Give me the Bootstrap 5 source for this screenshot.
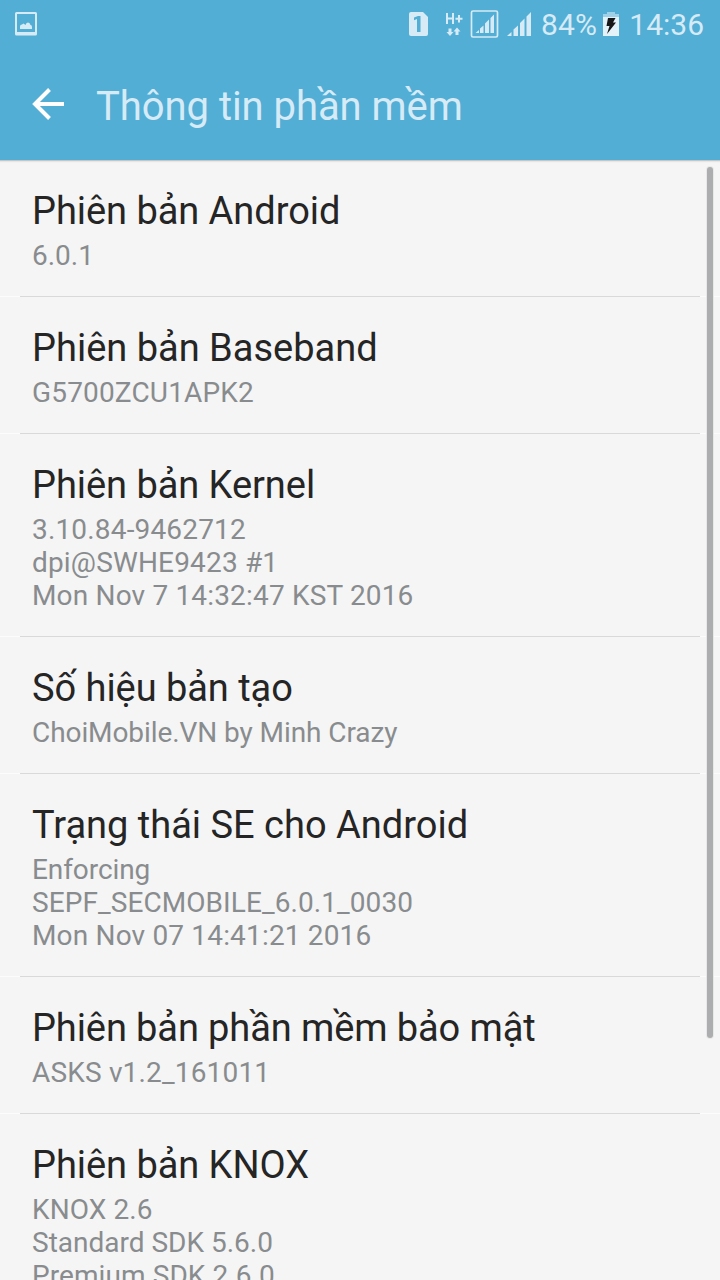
<!DOCTYPE html>
<html lang="vi">
<head>
<meta charset="utf-8">
<meta name="viewport" content="width=device-width, initial-scale=1">
<title>Thông tin phần mềm</title>
<link href="https://cdn.jsdelivr.net/npm/bootstrap@5.3.0/dist/css/bootstrap.min.css" rel="stylesheet">
<style>
body{font-family:Roboto,"Noto Sans",sans-serif;background:#f5f5f5;width:720px;height:1280px}
.top-area{background:#52aed5;height:160px;box-shadow:0 1px 0 #c6c6c6,0 2px 1px #e6e6e6;color:#d6ebf5}
.status{height:50px;padding:0 16px 0 14px}
.status svg,.titlebar svg{display:block;flex:none}
.stat-text{font-size:30px;line-height:50px}
.pct{width:65px;letter-spacing:.2px}
.titlebar{height:110px;padding-left:32px}
.titlebar h1{font-size:40px;font-weight:400;line-height:48px;margin:4px 0 0 32px;letter-spacing:-.05px}
.info{padding:29px 32px 24px;margin-bottom:1px}
.info::after{content:"";display:block;height:1px;background:linear-gradient(90deg,#fcfcfc 20px,#d9d9d9 20px,#d9d9d9 700px,#fcfcfc 700px);margin:24px -32px -25px}
.info h2{font-size:38px;line-height:45px;font-weight:400;color:#252525;margin:0 0 5px;letter-spacing:-.05px}
.info h2.tight{letter-spacing:-.1px}
.info h2.even{letter-spacing:0}
.info p{font-size:28px;line-height:33px;color:#898c8e;margin:0}
.tight{letter-spacing:-.08px}
.loose{letter-spacing:.08px}
.wide{letter-spacing:.17px}
.thumb{left:707px;top:167px;width:6px;height:871px;border-radius:3px;background:#abadae;box-shadow:0 0 0 1px #e8e8e8}
</style>
</head>
<body class="overflow-hidden position-relative">
<header class="top-area position-relative">
  <div class="status d-flex align-items-center">
    <svg width="24" height="50" viewBox="14 0 24 50"><path fill-rule="evenodd" d="M16.500 12h19q1.500 0 1.500 1.500v20.500q0 1.500-1.500 1.500h-19q-1.500 0-1.500-1.500V13.500q0-1.500 1.500-1.500zM17 14v18h18V14z" fill="#d6ebf5"/><path d="M20 29v-2.500q0-2 2-2l1.500-1 2 1.500q.5-2.500 2.500-2.500 2 0 2.500 2.500 1.500 0 1.500 2V29z" fill="#d6ebf5"/></svg>
    <svg class="ms-auto" width="132" height="50" viewBox="400 0 132 50" fill="#d6ebf5">
      <path d="M411 12h12l5 5v17q0 2-2 2h-15q-2 0-2-2V14q0-2 2-2z"/>
      <path d="M414 17.500l4-1.500h2.500v16H417V19l-3 1.300z" fill="#52aed5"/>
      <path d="M446 13h2v4.500h4V13h2v11h-2v-4.500h-4V24h-2zM458 15h2v2.700h2.500v2H460v2.800h-2v-2.800h-2.500v-2h2.500z"/>
      <path d="M448.500 28.500h3V32h2l-3.500 4-3.500-4h2zM455.500 35v-3.500h-2l3.500-4 3.500 4h-2V35z"/>
      <rect x="471.500" y="11" width="26" height="26" rx="1.500" fill="none" stroke="#d6ebf5" stroke-width="1.700"/>
      <path d="M475.500 33l3.500-3V33zM480 28.500l3.500-3v7.500H480zM485 23.500l4-4V33h-4zM490.500 18l3.500-3.500V33h-3.500z"/>
      <path d="M507 36l4.500-4V36zM513.500 29.500l4.500-4V36h-4.500zM520 23l4.500-4.500V36H520zM526.500 16.500l4.500-4.500v24h-4.500z"/>
    </svg>
    <span class="stat-text pct text-end">84%</span>
    <svg width="16" height="50" viewBox="603 0 16 50" style="margin-left:6px;margin-right:10px"><path d="M607 12h8v2h4v3h-16v-3h4z" fill="#9ed1e8"/><path d="M603 17h16v19h-16z" fill="#e3f2f8"/><path d="M608 18h7.500l-2.500 4.500h3L607 34l2.500-8h-3z" fill="#171717"/></svg>
    <span class="stat-text">14:36</span>
  </div>
  <div class="titlebar d-flex align-items-center">
    <svg width="32" height="34" viewBox="32 88 32 34" fill="none" stroke="#fff" stroke-width="4"><path d="M64 104H36M49.500 89.500L35 104l14.500 14.500"/></svg>
    <h1>Thông tin phần mềm</h1>
  </div>
</header>
<main>
  <section class="info"><h2>Phiên bản Android</h2><p>6.0.1</p></section>
  <section class="info"><h2 class="even">Phiên bản Baseband</h2><p class="wide">G5700ZCU1APK2</p></section>
  <section class="info"><h2>Phiên bản Kernel</h2><p class="wide">3.10.84-9462712<br>dpi@SWHE9423 #1<br>Mon Nov 7 14:32:47 KST 2016</p></section>
  <section class="info"><h2>Số hiệu bản tạo</h2><p class="tight">ChoiMobile.VN by Minh Crazy</p></section>
  <section class="info"><h2 class="even">Trạng thái SE cho Android</h2><p><span class="tight">Enforcing</span><br><span class="loose">SEPF_SECMOBILE_6.0.1_0030</span><br><span class="wide">Mon Nov 07 14:41:21 2016</span></p></section>
  <section class="info"><h2 class="tight">Phiên bản phần mềm bảo mật</h2><p class="wide">ASKS v1.2_161011</p></section>
  <section class="info"><h2>Phiên bản KNOX</h2><p><span class="loose">KNOX 2.6</span><br>Standard SDK 5.6.0<br><span class="loose">Premium SDK 2.6.0</span></p></section>
</main>
<div class="thumb position-absolute"></div>
<script src="https://cdn.jsdelivr.net/npm/bootstrap@5.3.0/dist/js/bootstrap.bundle.min.js"></script>
</body>
</html>
